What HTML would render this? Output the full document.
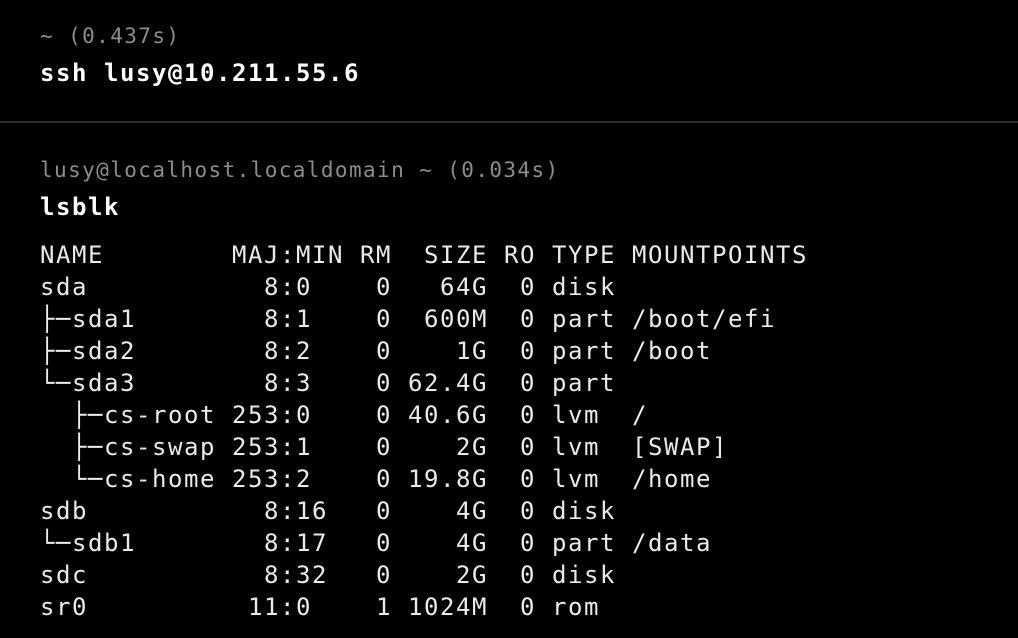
<!DOCTYPE html>
<html><head><style>
html,body{margin:0;padding:0;background:#000;width:1018px;height:638px;overflow:hidden}
body{font-family:"DejaVu Sans Mono","Liberation Mono",monospace;color:#f0f0f0;position:relative}
.l{position:absolute;left:40px;white-space:pre;line-height:32px;height:32px}
.h{font-size:21px;letter-spacing:1.4px;color:#8c8c8c}
.c{font-size:24px;letter-spacing:1.55px;font-weight:bold;color:#fff}
.t{font-size:24px;letter-spacing:1.55px;color:#eaeaea}
.hr{position:absolute;left:0;top:121px;width:1018px;height:2px;background:#2e2e2e}
</style></head><body>
<div class="l h" style="top:20px">~ (0.437s)</div>
<div class="l c" style="top:57px">ssh lusy@10.211.55.6</div>
<div class="hr"></div>
<div class="l h" style="top:154px">lusy@localhost.localdomain ~ (0.034s)</div>
<div class="l c" style="top:191px">lsblk</div>
<div class="l t" style="top:239px">NAME        MAJ:MIN RM  SIZE RO TYPE MOUNTPOINTS</div>
<div class="l t" style="top:271px">sda           8:0    0   64G  0 disk </div>
<div class="l t" style="top:303px">├─sda1        8:1    0  600M  0 part /boot/efi</div>
<div class="l t" style="top:335px">├─sda2        8:2    0    1G  0 part /boot</div>
<div class="l t" style="top:367px">└─sda3        8:3    0 62.4G  0 part </div>
<div class="l t" style="top:399px">  ├─cs-root 253:0    0 40.6G  0 lvm  /</div>
<div class="l t" style="top:431px">  ├─cs-swap 253:1    0    2G  0 lvm  [SWAP]</div>
<div class="l t" style="top:463px">  └─cs-home 253:2    0 19.8G  0 lvm  /home</div>
<div class="l t" style="top:495px">sdb           8:16   0    4G  0 disk </div>
<div class="l t" style="top:527px">└─sdb1        8:17   0    4G  0 part /data</div>
<div class="l t" style="top:559px">sdc           8:32   0    2G  0 disk </div>
<div class="l t" style="top:591px">sr0          11:0    1 1024M  0 rom  </div>
</body></html>
